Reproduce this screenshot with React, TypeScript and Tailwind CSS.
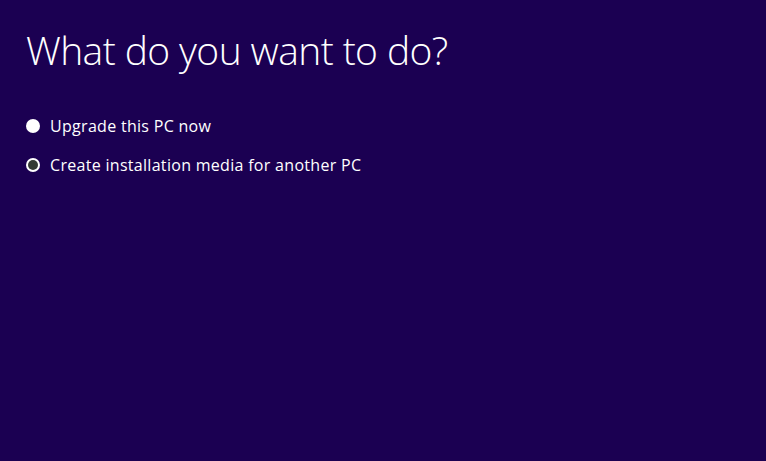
export default function App() {
  return (
    <div className="h-[461px] w-[766px] overflow-hidden bg-[#1b0052] px-[26px] pt-[24px] text-white [font-family:'Open_Sans',sans-serif]">
      <h1 className="text-[39px] font-light leading-[52px] tracking-[-0.6px]">What do you want to do?</h1>

      <div className="mt-[39px] flex flex-col gap-[17px]">
        <label className="flex items-center gap-[10px]">
          <span className="h-[14px] w-[14px] rounded-full bg-white" />
          <span className="text-[16px] leading-[22px] tracking-[0.3px]">Upgrade this PC now</span>
        </label>
        <label className="flex items-center gap-[10px]">
          <span className="flex h-[14px] w-[14px] items-center justify-center rounded-full bg-white">
            <span className="h-[10px] w-[10px] rounded-full bg-[#333a33]" />
          </span>
          <span className="text-[16px] leading-[22px] tracking-[0.3px]">Create installation media for another PC</span>
        </label>
      </div>
    </div>
  );
}
